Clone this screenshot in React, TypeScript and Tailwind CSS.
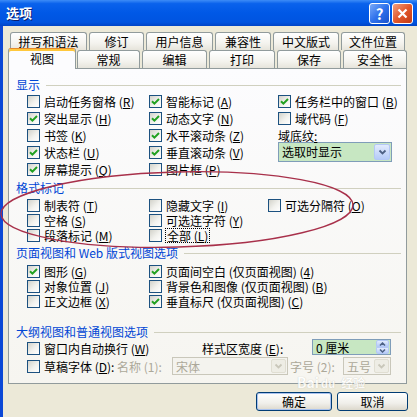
import React from "react";

const Mn = ({ c }: { c: string }) => (
  <>
    {" ("}
    <span className="inline-block leading-[13px] underline underline-offset-[1px]">{c}</span>
    {")"}
  </>
);

function Box({ checked }: { checked?: boolean }) {
  return (
    <span className="flex h-[13px] w-[13px] shrink-0 items-center justify-center border border-[#1C5180] bg-[linear-gradient(135deg,#D2D2CA,#F2F2EE_55%,#FFFFFF)]">
      {checked && (
        <svg width="9" height="9" viewBox="0 0 9 9">
          <path d="M1 4.2 L3.4 6.6 L8 2" fill="none" stroke="#21A121" strokeWidth="2" />
        </svg>
      )}
    </span>
  );
}

function Check({
  checked,
  children,
  h = "h-[17px]",
  focus,
}: {
  checked?: boolean;
  children: React.ReactNode;
  h?: string;
  focus?: boolean;
}) {
  return (
    <div className={`flex items-center ${h}`}>
      <Box checked={checked} />
      {focus ? (
        <span className="ml-[3px] whitespace-nowrap border border-dotted border-black px-[1px] leading-[13px]">{children}</span>
      ) : (
        <span className="ml-[4px] whitespace-nowrap leading-[13px]">{children}</span>
      )}
    </div>
  );
}

function GroupLabel({ children, className = "" }: { children: React.ReactNode; className?: string }) {
  return (
    <div className={`flex h-[16px] items-center pl-[7px] pr-[5px] ${className}`}>
      <span className="whitespace-nowrap text-[#0046D5]">{children}</span>
      <span className="ml-[6px] h-px flex-1 bg-[#D0D0BF]" />
    </div>
  );
}

function Chevron({ color = "#4D6185", up }: { color?: string; up?: boolean }) {
  return (
    <svg width="9" height="6" viewBox="0 0 9 6">
      <path d={up ? "M1.5 4.5 L4.5 1.5 L7.5 4.5" : "M1.5 1.5 L4.5 4.5 L7.5 1.5"} fill="none" stroke={color} strokeWidth="1.8" />
    </svg>
  );
}

const row1 = [
  { t: "拼写和语法", w: "w-[77px]" },
  { t: "修订", w: "w-[55px]" },
  { t: "用户信息", w: "w-[67px]" },
  { t: "兼容性", w: "w-[56px]" },
  { t: "中文版式", w: "w-[66px]" },
  { t: "文件位置", w: "w-[64px]" },
];

const row2 = [
  { t: "常规", w: "w-[63px] ml-[1px]" },
  { t: "编辑", w: "w-[65px] ml-[2px]" },
  { t: "打印", w: "w-[66px] ml-[2px]" },
  { t: "保存", w: "w-[64px] ml-[2px]" },
  { t: "安全性", w: "w-[64px] ml-[2px]" },
];

const tabCls =
  "flex h-[18px] items-center justify-center rounded-t-[3px] border border-b-0 border-[#919B9C] bg-[linear-gradient(180deg,#FFFFFF,#F4F3EE_60%,#E6E4DB)]";

export default function App() {
  return (
    <div className="relative h-[417px] w-[417px] overflow-hidden bg-[#ECE9D8] font-['Noto_Sans_CJK_SC','Noto_Sans',sans-serif] text-[12px] leading-[14px] text-black">
      {/* title bar */}
      <div className="flex h-[26px] items-center bg-[linear-gradient(180deg,#3D8CF7_0%,#0A62EC_14%,#0058E6_50%,#0054E0_85%,#0044C6_100%)]">
        <span className="ml-[6px] text-[13px] font-bold text-white [text-shadow:1px_1px_0_#0A1E6E]">选项</span>
        <div className="ml-auto mr-[4px] flex gap-[2px]">
          <div className="flex h-[21px] w-[21px] items-center justify-center rounded-[3px] border border-white bg-[linear-gradient(135deg,#7AAAF8,#2F72EC_50%,#1A52CC)] text-[15px] font-bold leading-none text-white">
            ?
          </div>
          <div className="flex h-[21px] w-[21px] items-center justify-center rounded-[3px] border border-white bg-[linear-gradient(135deg,#F2A080,#E2582C_50%,#C23A14)]">
            <svg width="11" height="11" viewBox="0 0 11 11">
              <path d="M1.5 1.5 L9.5 9.5 M9.5 1.5 L1.5 9.5" stroke="white" strokeWidth="2.2" />
            </svg>
          </div>
        </div>
      </div>

      {/* body */}
      <div className="flex h-[391px] flex-col border-l-[3px] border-l-[#0B48D6]">
        {/* tabs row 1 */}
        <div className="mt-[6px] flex h-[18px] gap-[2px] pl-[7px]">
          {row1.map((t) => (
            <div key={t.t} className={`${tabCls} ${t.w}`}>
              {t.t}
            </div>
          ))}
        </div>
        {/* tabs row 2 */}
        <div className="flex h-[18px] items-end pl-[5px]">
          <div className="relative z-10 -mb-px flex h-[21px] w-[68px] items-center justify-center rounded-t-[3px] border border-b-0 border-[#919B9C] border-t-[#E68B2C] bg-[#FCFCFE] shadow-[inset_0_2px_0_#FFC83C]">
            视图
          </div>
          {row2.map((t) => (
            <div key={t.t} className={`${tabCls} ${t.w}`}>
              {t.t}
            </div>
          ))}
        </div>

        {/* panel */}
        <div className="ml-[5px] flex h-[316px] w-[399px] flex-col border border-[#919B9C] bg-[linear-gradient(180deg,#FCFCFE,#F6F5F0)]">
          {/* 显示 */}
          <GroupLabel className="mt-[8px]">显示</GroupLabel>
          <div className="flex pl-[18px]">
            <div className="w-[122px]">
              <Check>启动任务窗格<Mn c="R" /></Check>
              <Check checked>突出显示<Mn c="H" /></Check>
              <Check>书签<Mn c="K" /></Check>
              <Check checked>状态栏<Mn c="U" /></Check>
              <Check checked>屏幕提示<Mn c="Q" /></Check>
            </div>
            <div className="w-[129px]">
              <Check checked>智能标记<Mn c="A" /></Check>
              <Check checked>动态文字<Mn c="N" /></Check>
              <Check checked>水平滚动条<Mn c="Z" /></Check>
              <Check checked>垂直滚动条<Mn c="V" /></Check>
              <Check>图片框<Mn c="P" /></Check>
            </div>
            <div className="flex-1">
              <Check checked>任务栏中的窗口<Mn c="B" /></Check>
              <Check>域代码<Mn c="F" /></Check>
              <div className="flex h-[17px] items-center leading-[13px]">
                域底纹<span className="inline-block leading-[13px] underline underline-offset-[1px]">:</span>
              </div>
              <div className="-mt-[2px] flex h-[20px] w-[114px] items-center border border-[#7F9DB9] bg-[#C7E7C2]">
                <span className="flex-1 pl-[3px]">选取时显示</span>
                <span className="mr-px flex h-[16px] w-[16px] items-center justify-center rounded-[2px] border border-[#B4C8F6] bg-[linear-gradient(180deg,#E2EBFD,#B5CBF8)]">
                  <Chevron />
                </span>
              </div>
            </div>
          </div>

          {/* 格式标记 */}
          <GroupLabel className="mt-[2px]">格式标记</GroupLabel>
          <div className="mt-[2px] flex pl-[18px]">
            <div className="w-[122px]">
              <Check h="h-[15px]">制表符<Mn c="T" /></Check>
              <Check h="h-[15px]">空格<Mn c="S" /></Check>
              <Check h="h-[15px]">段落标记<Mn c="M" /></Check>
            </div>
            <div className="w-[119px]">
              <Check h="h-[15px]">隐藏文字<Mn c="I" /></Check>
              <Check h="h-[15px]">可选连字符<Mn c="Y" /></Check>
              <Check h="h-[15px]" focus>
                全部<Mn c="L" />
              </Check>
            </div>
            <div className="flex-1">
              <Check h="h-[15px]">可选分隔符<Mn c="O" /></Check>
            </div>
          </div>

          {/* 页面视图 */}
          <GroupLabel className="mt-[2px]">页面视图和 Web 版式视图选项</GroupLabel>
          <div className="mt-[3px] flex pl-[18px]">
            <div className="w-[122px]">
              <Check checked h="h-[15px]">图形<Mn c="G" /></Check>
              <Check h="h-[15px]">对象位置<Mn c="J" /></Check>
              <Check h="h-[15px]">正文边框<Mn c="X" /></Check>
            </div>
            <div className="flex-1">
              <Check checked h="h-[15px]">页面间空白 (仅页面视图)<Mn c="4" /></Check>
              <Check h="h-[15px]">背景色和图像 (仅页面视图)<Mn c="B" /></Check>
              <Check checked h="h-[15px]">垂直标尺 (仅页面视图)<Mn c="C" /></Check>
            </div>
          </div>

          {/* 大纲 */}
          <GroupLabel className="mt-[15px] h-[14px]">大纲视图和普通视图选项</GroupLabel>
          <div className="flex h-[16px] items-center pl-[18px]">
            <div className="w-[175px]">
              <Check h="h-[16px]">窗口内自动换行<Mn c="W" /></Check>
            </div>
            <div className="w-[110px] whitespace-nowrap leading-[13px]">
              样式区宽度<Mn c="E" />:
            </div>
            <div className="-mt-[2px] flex h-[16px] w-[79px] items-center border border-[#7F9DB9] bg-[#C7E7C2]">
              <span className="flex-1 pl-[3px] leading-[13px]">0 厘米</span>
              <span className="mr-px flex h-[14px] w-[13px] flex-col">
                <span className="flex h-[7px] items-center justify-center rounded-t-[2px] border border-[#B4C8F6] bg-[linear-gradient(180deg,#E2EBFD,#B5CBF8)]">
                  <svg width="7" height="4" viewBox="0 0 7 4"><path d="M1 3.5 L3.5 1 L6 3.5" fill="none" stroke="#4D6185" strokeWidth="1.5" /></svg>
                </span>
                <span className="flex h-[7px] items-center justify-center rounded-b-[2px] border border-[#B4C8F6] bg-[linear-gradient(180deg,#E2EBFD,#B5CBF8)]">
                  <svg width="7" height="4" viewBox="0 0 7 4"><path d="M1 0.5 L3.5 3 L6 0.5" fill="none" stroke="#4D6185" strokeWidth="1.5" /></svg>
                </span>
              </span>
            </div>
          </div>
          <div className="mt-px flex h-[18px] items-center pl-[18px]">
            <div className="w-[90px]">
              <Check h="h-[18px]">草稿字体<Mn c="D" />:</Check>
            </div>
            <div className="w-[55px] whitespace-nowrap leading-[13px] text-[#ACA899]">名称 (1):</div>
            <div className="flex h-[18px] w-[116px] items-center border border-[#C9C7BA] bg-[#F4F3EE]">
              <span className="flex-1 pl-[3px] leading-[13px] text-[#ACA899]">宋体</span>
              <span className="mr-px flex h-[14px] w-[15px] items-center justify-center rounded-[2px] border border-[#E0DED2] bg-[#EEEDE5]">
                <Chevron color="#C9C7BA" />
              </span>
            </div>
            <div className="ml-[2px] w-[53px] whitespace-nowrap leading-[13px] text-[#ACA899]">字号 (2):</div>
            <div className="flex h-[18px] w-[48px] items-center border border-[#C9C7BA] bg-[#F4F3EE]">
              <span className="flex-1 pl-[3px] leading-[13px] text-[#ACA899]">五号</span>
              <span className="mr-px flex h-[14px] w-[15px] items-center justify-center rounded-[2px] border border-[#E0DED2] bg-[#EEEDE5]">
                <Chevron color="#C9C7BA" />
              </span>
            </div>
          </div>
        </div>

        {/* buttons */}
        <div className="mt-[8px] flex justify-end gap-[5px] pr-[9px]">
          <button className="flex h-[19px] w-[76px] items-center justify-center rounded-[3px] border border-[#003C74] bg-[linear-gradient(180deg,#FFFFFF,#F0EFEA_60%,#DCD8CC)] shadow-[inset_0_0_0_1px_#A9C2EF]">
            确定
          </button>
          <button className="flex h-[19px] w-[71px] items-center justify-center rounded-[3px] border border-[#003C74] bg-[linear-gradient(180deg,#FFFFFF,#F0EFEA_60%,#DCD8CC)]">
            取消
          </button>
        </div>
      </div>

      {/* watermark */}
      <div className="pointer-events-none absolute left-[297px] top-[375px] flex h-[14px] items-end text-[14px] font-bold leading-[14px] text-white opacity-80 [text-shadow:0_0_1px_#B8B5A8]">
        <span>Bai</span>
        <span className="ml-[2px] text-[11px] leading-[11px]">du</span>
        <span className="ml-[6px] text-[12px] leading-[12px]">经验</span>
      </div>

      {/* red ellipse annotation */}
      <svg className="pointer-events-none absolute left-0 top-0" width="417" height="417" viewBox="0 0 417 417">
        <ellipse cx="177" cy="209.5" rx="176" ry="37.5" transform="rotate(-1.5 177 209.5)" fill="none" stroke="#A8304A" strokeWidth="1.3" />
      </svg>
    </div>
  );
}
